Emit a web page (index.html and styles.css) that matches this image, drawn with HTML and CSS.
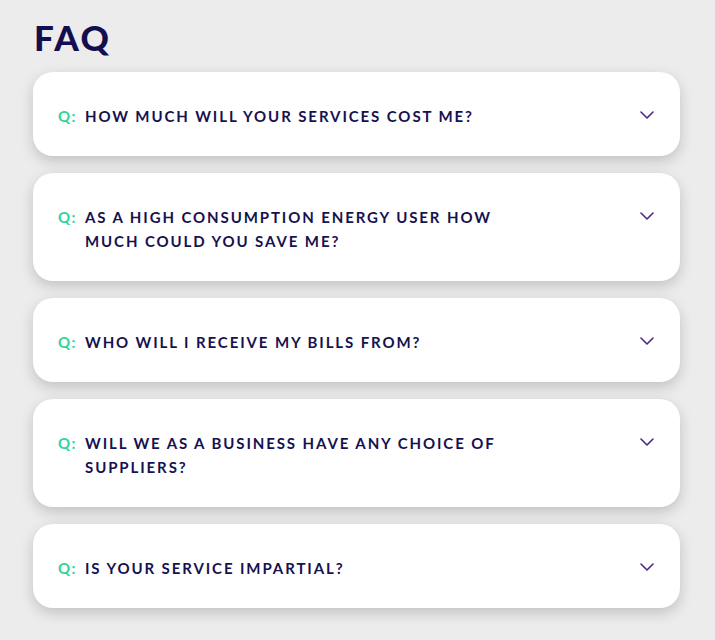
FILE: index.html
```html
<!DOCTYPE html>
<html lang="en">
<head>
<meta charset="utf-8">
<title>FAQ</title>
<link rel="stylesheet" href="styles.css">
</head>
<body>
<main class="faq">
  <h1 class="faq-title">FAQ</h1>
  <div class="faq-list">
    <div class="faq-item">
      <span class="faq-q">Q:</span>
      <span class="faq-text">HOW MUCH WILL YOUR SERVICES COST ME?</span>
      <svg class="faq-chevron" viewBox="0 0 14 8" width="14" height="8"><path d="M1 1l6 6 6-6" fill="none" stroke="currentColor" stroke-width="1.6" stroke-linecap="round" stroke-linejoin="round"/></svg>
    </div>
    <div class="faq-item">
      <span class="faq-q">Q:</span>
      <span class="faq-text">AS A HIGH CONSUMPTION ENERGY USER HOW MUCH COULD YOU SAVE ME?</span>
      <svg class="faq-chevron" viewBox="0 0 14 8" width="14" height="8"><path d="M1 1l6 6 6-6" fill="none" stroke="currentColor" stroke-width="1.6" stroke-linecap="round" stroke-linejoin="round"/></svg>
    </div>
    <div class="faq-item">
      <span class="faq-q">Q:</span>
      <span class="faq-text">WHO WILL I RECEIVE MY BILLS FROM?</span>
      <svg class="faq-chevron" viewBox="0 0 14 8" width="14" height="8"><path d="M1 1l6 6 6-6" fill="none" stroke="currentColor" stroke-width="1.6" stroke-linecap="round" stroke-linejoin="round"/></svg>
    </div>
    <div class="faq-item">
      <span class="faq-q">Q:</span>
      <span class="faq-text">WILL WE AS A BUSINESS HAVE ANY CHOICE OF SUPPLIERS?</span>
      <svg class="faq-chevron" viewBox="0 0 14 8" width="14" height="8"><path d="M1 1l6 6 6-6" fill="none" stroke="currentColor" stroke-width="1.6" stroke-linecap="round" stroke-linejoin="round"/></svg>
    </div>
    <div class="faq-item">
      <span class="faq-q">Q:</span>
      <span class="faq-text">IS YOUR SERVICE IMPARTIAL?</span>
      <svg class="faq-chevron" viewBox="0 0 14 8" width="14" height="8"><path d="M1 1l6 6 6-6" fill="none" stroke="currentColor" stroke-width="1.6" stroke-linecap="round" stroke-linejoin="round"/></svg>
    </div>
  </div>
</main>
</body>
</html>
```
FILE: styles.css
```css
html, body {
  margin: 0;
  padding: 0;
  background: #ececec;
}
body {
  font-family: "Lato", "Open Sans", sans-serif;
  color: #15104f;
}
.faq {
  padding: 14px 35px 20px 33px;
}
.faq-title {
  margin: 0 0 0 1px;
  font-size: 35px;
  line-height: 46px;
  font-weight: 900;
  letter-spacing: 2.5px;
  color: #120f50;
  height: 58px;
}
.faq-list {
  display: flex;
  flex-direction: column;
  gap: 17px;
}
.faq-item {
  display: flex;
  align-items: flex-start;
  background: #fff;
  border-radius: 20px;
  box-shadow: 0 5px 14px rgba(0, 0, 0, 0.18);
  padding: 32px 26px 28px 25px;
}
.faq-q {
  flex: none;
  width: 27px;
  font-size: 15px;
  line-height: 24px;
  font-weight: 700;
  letter-spacing: 1.5px;
  color: #2ed69b;
}
.faq-text {
  flex: none;
  width: 430px;
  font-size: 15px;
  line-height: 24px;
  font-weight: 700;
  letter-spacing: 1.9px;
  color: #16114f;
}
.faq-chevron {
  margin-left: auto;
  margin-top: 7px;
  color: #4b2a83;
}
```
